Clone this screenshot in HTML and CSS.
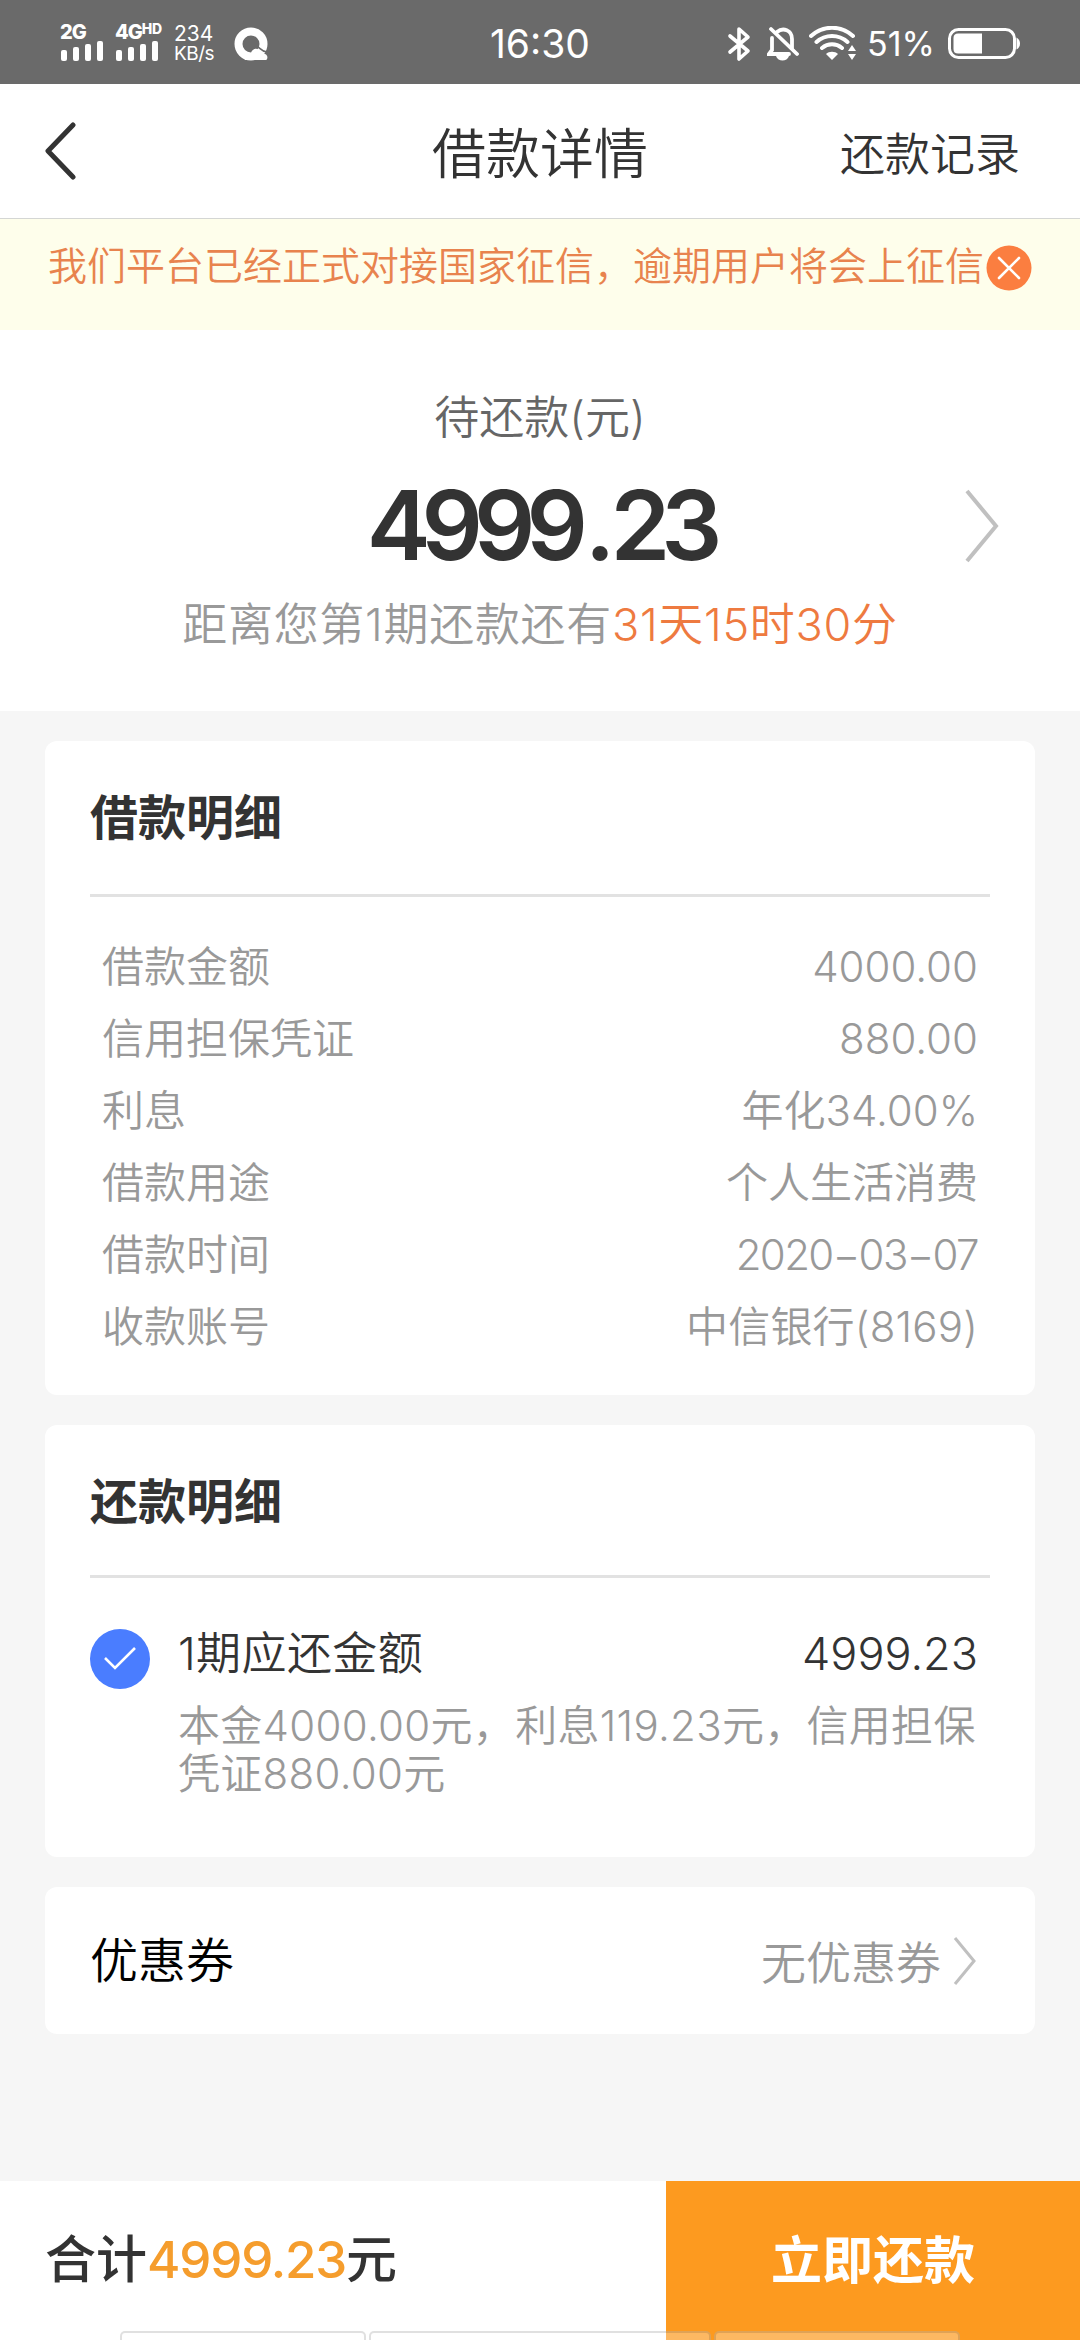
FILE: index.html
```html
<!DOCTYPE html>
<html lang="zh-CN">
<head>
  <meta charset="UTF-8">
  <title>借款详情</title>
  <link rel="stylesheet" href="styles.css">
</head>
<body>
  <div class="status-bar">
    <div class="status-left">
      <div class="signal">
        <span class="net">2G</span>
        <svg width="44" height="20" viewBox="0 0 44 20" fill="#fff">
          <rect x="1" y="9" width="6" height="11" rx="2"/>
          <rect x="13" y="6" width="6" height="14" rx="2"/>
          <rect x="25" y="3" width="6" height="17" rx="2"/>
          <rect x="37" y="0" width="6" height="20" rx="2"/>
        </svg>
      </div>
      <div class="signal signal-hd">
        <span class="net">4G<sup>HD</sup></span>
        <svg width="44" height="20" viewBox="0 0 44 20" fill="#fff">
          <rect x="1" y="9" width="6" height="11" rx="2"/>
          <rect x="13" y="6" width="6" height="14" rx="2"/>
          <rect x="25" y="3" width="6" height="17" rx="2"/>
          <rect x="37" y="0" width="6" height="20" rx="2"/>
        </svg>
      </div>
      <div class="speed"><span>234</span><span class="unit">KB/s</span></div>
      <svg width="34" height="34" viewBox="0 0 34 34">
        <circle cx="17" cy="17" r="12.5" fill="none" stroke="#fff" stroke-width="8"/>
        <path d="M11 33c-1-4 2-6 6-7 1-4 6-6 9-2 1 2 3 2 5 3 3 1 3 5 1 6z" fill="#fff"/>
        <path d="M24 20c2 1 3 4 9 5" fill="none" stroke="#6a6a6a" stroke-width="1.5"/>
      </svg>
    </div>
    <div class="clock">16:30</div>
    <div class="status-right">
      <svg width="24" height="36" viewBox="0 0 24 36" fill="none" stroke="#fff" stroke-width="3.6" stroke-linejoin="round" stroke-linecap="round">
        <path d="M3 10l18 15-9 8V3l9 8L3 26"/>
      </svg>
      <svg class="bell" width="32" height="36" viewBox="0 0 32 36" fill="none" stroke="#fff" stroke-width="3.8" stroke-linecap="round">
        <path d="M5 12v12l-3 4h20M10 6c6-5 15-2 15 7v9"/>
        <path d="M4 3l26 25"/>
        <path d="M9 30c2 6 11 6 13 0z" fill="#fff" stroke="none"/>
      </svg>
      <svg class="wifi" width="48" height="36" viewBox="0 0 48 36" fill="none" stroke="#fff" stroke-width="4" stroke-linecap="round">
        <path d="M2 10c12-11 30-11 42 0M7.500 16c9-8 22-8 31 0M13 22c6-5 14-5 20 0"/>
        <path d="M17 28c3-3 9-3 12 0l-6 6z" fill="#fff" stroke="none"/>
        <path d="M39 25l4-6 4 6zM39 28l4 6 4-6z" fill="#fff" stroke="none"/>
      </svg>
      <span class="percent">51%</span>
      <svg class="battery" width="72" height="32" viewBox="0 0 72 32">
        <rect x="1.500" y="1.500" width="65" height="28" rx="9" fill="none" stroke="#fff" stroke-width="3"/>
        <path d="M10 5.500h24v20H10q-4.500 0-4.500-4.500v-11q0-4.500 4.500-4.500z" fill="#fff"/>
        <path d="M68.500 9.500q3.500 2 3.500 6t-3.500 6z" fill="#fff"/>
      </svg>
    </div>
  </div>

  <header class="header">
    <svg class="back" width="32" height="58" viewBox="0 0 32 58" fill="none" stroke="#333" stroke-width="5" stroke-linecap="round" stroke-linejoin="round">
      <path d="M28 3L3 29l25 26"/>
    </svg>
    <h1>借款详情</h1>
    <a class="record">还款记录</a>
  </header>

  <div class="notice">
    <span>我们平台已经正式对接国家征信，逾期用户将会上征信</span>
    <svg width="46" height="46" viewBox="0 0 46 46">
      <circle cx="23" cy="23" r="22.500" fill="#fb7e40"/>
      <path d="M13 13l20 20M33 13L13 33" stroke="#fff" stroke-width="2.600" stroke-linecap="round"/>
    </svg>
  </div>

  <section class="summary">
    <div class="summary-label">待还款(元)</div>
    <div class="summary-amount">
      <span class="amount">4999<span class="point">.</span>23</span>
      <svg width="36" height="76" viewBox="0 0 36 76" fill="none" stroke="#c0c0c0" stroke-width="4">
        <path d="M3 3l29 35L3 73"/>
      </svg>
    </div>
    <div class="summary-tip">距离您第1期还款还有<span class="countdown">31天15时30分</span></div>
  </section>

  <main class="cards">
    <section class="card loan">
      <h2>借款明细</h2>
      <dl class="rows">
        <div class="row"><dt>借款金额</dt><dd>4000.00</dd></div>
        <div class="row"><dt>信用担保凭证</dt><dd>880.00</dd></div>
        <div class="row"><dt>利息</dt><dd>年化34.00%</dd></div>
        <div class="row"><dt>借款用途</dt><dd>个人生活消费</dd></div>
        <div class="row"><dt>借款时间</dt><dd class="date">2020−03−07</dd></div>
        <div class="row"><dt>收款账号</dt><dd class="bank">中信银行(8169)</dd></div>
      </dl>
    </section>

    <section class="card repay">
      <h2>还款明细</h2>
      <div class="period">
        <svg width="60" height="60" viewBox="0 0 60 60">
          <circle cx="30" cy="30" r="30" fill="#4a7dff"/>
          <path d="M15 29l10 10 20-20" fill="none" stroke="#fff" stroke-width="2.600"/>
        </svg>
        <div class="period-body">
          <div class="period-head"><span class="period-name">1期应还金额</span><span>4999.23</span></div>
          <p>本金4000.00元，利息119.23元，信用担保<br>凭证880.00元</p>
        </div>
      </div>
    </section>

    <section class="card coupon">
      <span class="coupon-name">优惠券</span>
      <div class="coupon-value">
        <span>无优惠券</span>
        <svg width="24" height="50" viewBox="0 0 24 50" fill="none" stroke="#c0c0c0" stroke-width="3">
          <path d="M2 2l19 23L2 48"/>
        </svg>
      </div>
    </section>
  </main>

  <footer class="footer">
    <div class="total">合计<span class="total-amount">4999.23</span>元</div>
    <button class="pay">立即还款</button>
    <div class="float-bar"><i></i><i></i><i></i></div>
  </footer>
</body>
</html>
```

FILE: styles.css
```css
* {
  box-sizing: border-box;
  margin: 0;
  padding: 0;
}

body {
  display: flex;
  flex-direction: column;
  width: 1080px;
  height: 2340px;
  overflow: hidden;
  background: #f6f6f6;
  color: #333;
  font-family: Inter, "Noto Sans CJK SC", sans-serif;
  font-weight: 350;
}

svg {
  display: block;
  flex: none;
}

.status-bar {
  display: grid;
  grid-template-columns: 1fr auto 1fr;
  height: 84px;
  padding: 0 60px;
  background: #6a6a6a;
  color: #fff;
}

.status-left {
  display: flex;
  align-items: center;
}

.signal {
  width: 55px;
  height: 42px;
}

.signal-hd {
  width: 59px;
}

.net {
  display: block;
  height: 18px;
  font-size: 20px;
  font-weight: 800;
  line-height: 18px;
  letter-spacing: -1px;
  white-space: nowrap;
}

.net sup {
  font-size: 14px;
  line-height: 0;
  vertical-align: 5px;
  letter-spacing: -0.3px;
}

.speed {
  display: flex;
  flex-direction: column;
  width: 60px;
  font-size: 21px;
  font-weight: 400;
  line-height: 20px;
}

.speed .unit {
  font-size: 19px;
  letter-spacing: -0.5px;
}

.clock {
  font-size: 39px;
  font-weight: 400;
  line-height: 88px;
}

.status-right {
  display: flex;
  align-items: center;
  justify-content: flex-end;
}

.bell {
  margin-left: 16px;
}

.wifi {
  margin-left: 10px;
}

.percent {
  margin-left: 10px;
  font-size: 34px;
  font-weight: 400;
  line-height: 86px;
}

.battery {
  margin-left: 13px;
}

.header {
  display: grid;
  grid-template-columns: 1fr auto 1fr;
  align-items: center;
  height: 135px;
  padding: 0 60px 0 45px;
  border-bottom: 1px solid #d4d6d4;
  background: #fff;
}

.header h1 {
  padding: 8px 15px 0 0;
  transform: translateX(15px);
  font-size: 54px;
  font-weight: inherit;
  line-height: 60px;
}

.record {
  justify-self: end;
  font-size: 45px;
}

.notice {
  display: flex;
  align-items: flex-start;
  justify-content: space-between;
  height: 111px;
  padding: 26px 48px 0;
  background: #fefeeb;
  color: #e8834e;
  font-size: 39px;
  line-height: 42px;
}

.summary {
  height: 381px;
  padding-top: 55px;
  background: #fff;
  text-align: center;
}

.summary-label {
  color: #666;
  font-size: 45px;
  line-height: 66px;
}

.summary-amount {
  display: grid;
  grid-template-columns: 1fr auto 1fr;
  align-items: center;
  height: 141px;
  padding: 9px 80px 0;
}

.amount {
  grid-column: 2;
  padding-bottom: 3px;
  font-size: 96px;
  font-weight: 600;
  line-height: 128px;
  letter-spacing: -9px;
}

.point {
  padding: 0 4px 0 6px;
}

.summary-amount svg {
  justify-self: end;
}

.summary-tip {
  color: #999;
  font-size: 45px;
  line-height: 66px;
  letter-spacing: 0.7px;
}

.countdown {
  color: #ee7a40;
}

.cards {
  display: flex;
  flex: 1;
  flex-direction: column;
  gap: 30px;
  padding: 30px 45px 0;
}

.card {
  padding: 0 45px;
  border-radius: 12px;
  background: #fff;
}

.card h2 {
  height: 153px;
  border-bottom: 3px solid #e2e2e2;
  font-size: 48px;
  font-weight: 700;
  line-height: 153px;
}

.loan {
  height: 654px;
}

.loan h2 {
  height: 156px;
}

.rows {
  padding: 34px 12px 0;
  color: #999;
  font-size: 42px;
  line-height: 72px;
}

.row {
  display: flex;
  justify-content: space-between;
}

.date {
  letter-spacing: -1.6px;
}

.bank {
  letter-spacing: 0.2px;
}

.repay {
  height: 432px;
}

.period {
  display: flex;
  gap: 28px;
  padding-top: 51px;
}

.period-body {
  flex: 1;
  min-width: 0;
  padding-right: 12px;
}

.period-head {
  display: flex;
  justify-content: space-between;
  font-size: 45px;
  line-height: 50px;
}

.period-name {
  letter-spacing: 0.4px;
}

.period-body p {
  margin-top: 23px;
  color: #999;
  font-size: 42px;
  line-height: 48px;
  letter-spacing: 0.3px;
  white-space: nowrap;
}

.coupon {
  display: flex;
  align-items: center;
  justify-content: space-between;
  height: 147px;
  color: #000;
  font-size: 48px;
}

.coupon-name {
  padding-bottom: 7px;
}

.coupon-value {
  display: flex;
  align-items: center;
  gap: 12px;
  padding-right: 13px;
  color: #999;
  font-size: 45px;
}

.footer {
  position: relative;
  display: flex;
  height: 159px;
  background: #fff;
}

.total {
  flex: 1;
  padding-left: 45px;
  font-size: 51px;
  font-weight: 500;
  line-height: 157px;
}

.total-amount {
  color: #f59d2d;
  letter-spacing: -1.2px;
}

.pay {
  width: 414px;
  border: 0;
  background: #fd9a1f;
  color: #fff;
  font: inherit;
  font-size: 51px;
  font-weight: 600;
  line-height: 156px;
}

.float-bar {
  position: absolute;
  left: 120px;
  bottom: 0;
  display: grid;
  grid-template-columns: 246px 342px 246px;
  gap: 3px;
  height: 9px;
}

.float-bar i {
  border: 2px solid rgba(0, 0, 0, 0.12);
  border-bottom: 0;
  border-radius: 5px 5px 0 0;
  background: rgba(255, 255, 255, 0.3);
}
```
